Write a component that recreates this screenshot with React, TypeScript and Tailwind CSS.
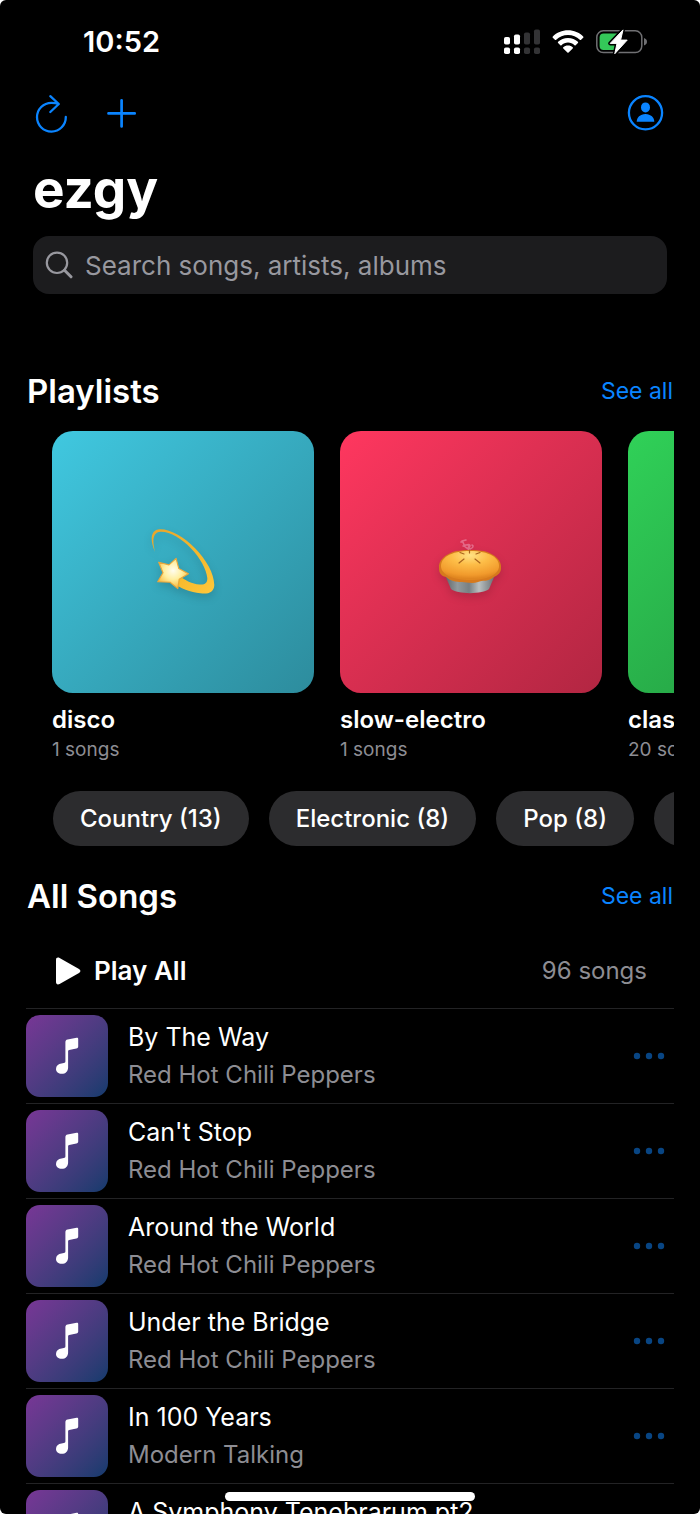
import type { ReactNode } from "react";

type Playlist = { name: string; count: number; gradient: string; art?: ReactNode };
type Song = { title: string; artist: string };

const songs: Song[] = [
  { title: "By The Way", artist: "Red Hot Chili Peppers" },
  { title: "Can't Stop", artist: "Red Hot Chili Peppers" },
  { title: "Around the World", artist: "Red Hot Chili Peppers" },
  { title: "Under the Bridge", artist: "Red Hot Chili Peppers" },
  { title: "In 100 Years", artist: "Modern Talking" },
  { title: "A Symphony Tenebrarum pt2", artist: "" },
];

const genres = ["Country (13)", "Electronic (8)", "Pop (8)"];

function DizzyStar() {
  return (
    <svg viewBox="0 0 66 68" className="w-[66px] h-[68px] drop-shadow-lg" aria-hidden="true">
      <defs>
        <linearGradient id="trail" x1="0" y1="0" x2="1" y2="1">
          <stop offset="0" stopColor="#e9a52c" />
          <stop offset="0.6" stopColor="#f6b92c" />
          <stop offset="1" stopColor="#ffc83c" />
        </linearGradient>
        <radialGradient id="star" cx="0.5" cy="0.4" r="0.65">
          <stop offset="0" stopColor="#fffdf0" />
          <stop offset="0.45" stopColor="#ffefa0" />
          <stop offset="1" stopColor="#f5ae2b" />
        </radialGradient>
      </defs>
      <path
        d="M5.200 24C-.2 13 0 1.500 10 1.300C31.500 1 64.300 34 64.300 57C64 65 57.500 66.300 50.500 65.300C40.500 64.300 30.500 61 21.500 53.500L28 47C35.500 52.500 42 56 49.500 56.500C55 57 57.500 55 57.300 50C56 32 30 3.200 10.500 3.700C2.500 4.200 2 13 5.200 24Z"
        fill="url(#trail)"
      />
      <path
        d="M26.100 30.400L28.800 40.500L38.500 45.800L29.200 51.200L27.800 60.600L20 54.300L7.700 53.700L13 44.800L8.700 34.300L19 36.900Z"
        fill="url(#star)"
        stroke="#eaa63a"
        strokeWidth="1.100"
        strokeLinejoin="round"
      />
    </svg>
  );
}

function Pie() {
  return (
    <svg viewBox="1 -10 66 66" className="size-[66px] drop-shadow-lg" aria-hidden="true">
      <defs>
        <linearGradient id="tin" x1="0" y1="0" x2="1" y2="0">
          <stop offset="0" stopColor="#5e6467" />
          <stop offset="0.25" stopColor="#929a9c" />
          <stop offset="0.48" stopColor="#777f82" />
          <stop offset="0.68" stopColor="#b9bfc0" />
          <stop offset="1" stopColor="#666c70" />
        </linearGradient>
        <radialGradient id="crust" cx="0.5" cy="0.15" r="0.8">
          <stop offset="0" stopColor="#ffe184" />
          <stop offset="0.4" stopColor="#fdbd47" />
          <stop offset="0.85" stopColor="#f19a2c" />
          <stop offset="1" stopColor="#e08620" />
        </radialGradient>
      </defs>
      <path d="M24 3c4-1 1 4 5 3s5 0 3 3M26 7c3 0 4 4 7 3s4-3 2-4M31 12c2-2-1-3 1-5M25 2l4-1" fill="none" stroke="#f0a5c2" strokeOpacity="0.500" strokeWidth="1.600" strokeLinecap="round" />
      <path d="M8 36L14 50C20 55.500 46 55.500 52 50L58 36Z" fill="url(#tin)" />
      <path d="M2 29C1 22 8 15 19 12C28 10.500 39 10.500 47 12C58 15 65 22 64 29C64 34 61 36 57 38C52 43 45 41 41 43C35 45 29 43 25 43C19 43 13 42 9 38C4 37 2 34 2 29Z" fill="#d67a1d" />
      <path d="M4 27C4 19 13 12 33 12C53 12 62 19 62 27C62 36 49 41 33 41C17 41 4 36 4 27Z" fill="url(#crust)" />
      <path d="M22 24l5-4M38 20l5 4M23 13.500l4 1.500M39 15l4-1.500M32.500 11v3" stroke="#a9641d" strokeWidth="1.200" strokeLinecap="round" />
    </svg>
  );
}

const playlists: Playlist[] = [
  { name: "disco", count: 1, gradient: "bg-linear-135 from-[#40c8e0] to-[#2d8c9d]", art: <DizzyStar /> },
  { name: "slow-electro", count: 1, gradient: "bg-linear-135 from-[#ff375f] to-[#b22642]", art: <Pie /> },
  { name: "classic", count: 20, gradient: "bg-linear-135 from-[#30d158] to-[#22923e]" },
];

function StatusBar() {
  return (
    <div className="flex h-[83px] items-center justify-between pl-[83px] pr-[53px]">
      <time className="text-[29px] leading-8 font-semibold">10:52</time>
      <div className="flex items-center gap-3">
        <svg viewBox="0 0 36 26" className="h-[26px] w-9" aria-hidden="true">
          <g fill="#fff">
            <rect x="0" y="8" width="6" height="7.500" rx="1.800" />
            <rect x="10" y="5.500" width="6" height="10" rx="1.800" />
            <rect x="0" y="18.500" width="6" height="6.500" rx="1.800" />
            <rect x="10" y="18.500" width="6" height="6.500" rx="1.800" />
          </g>
          <g fill="#333335">
            <rect x="20" y="3.500" width="6" height="12" rx="1.800" />
            <rect x="30" y="0.500" width="6" height="15" rx="1.800" />
            <rect x="20" y="18.500" width="6" height="6.500" rx="1.800" />
            <rect x="30" y="18.500" width="6" height="6.500" rx="1.800" />
          </g>
        </svg>
        <svg viewBox="0 0 32 24" className="h-6 w-8" aria-hidden="true" fill="#fff">
          <path d="M16 .3C22 .3 27.300 2.600 31.200 6.400C31.600 6.800 31.600 7.300 31.200 7.700L29.100 9.700C28.700 10.100 28.200 10.100 27.800 9.700C24.700 6.800 20.600 5 16 5S7.300 6.800 4.200 9.700C3.800 10.100 3.300 10.100 2.900 9.700L.8 7.700C.4 7.300 .4 6.800 .8 6.400C4.700 2.600 10 .3 16 .3Z" />
          <path d="M16 7.900C19.900 7.900 23.300 9.400 25.900 11.800C26.300 12.200 26.300 12.700 25.900 13.100L23.700 15.200C23.300 15.600 22.900 15.600 22.500 15.200C20.700 13.600 18.500 12.600 16 12.600S11.300 13.600 9.500 15.200C9.100 15.600 8.700 15.600 8.300 15.200L6.100 13.100C5.700 12.700 5.700 12.200 6.100 11.800C8.700 9.400 12.100 7.900 16 7.900Z" />
          <path d="M16 15.500C17.900 15.500 19.500 16.200 20.700 17.200C21.100 17.600 21.100 18 20.700 18.400L16.600 22.500C16.200 22.900 15.800 22.900 15.400 22.500L11.300 18.400C10.900 18 10.900 17.600 11.300 17.200C12.500 16.200 14.100 15.500 16 15.500Z" />
        </svg>
        <svg viewBox="0 0 51 26" className="h-[26px] w-[51px]" aria-hidden="true">
          <rect x="0.800" y="1.800" width="45" height="21.800" rx="6.500" fill="none" stroke="#707073" strokeWidth="1.500" />
          <path d="M48 9C50 9.800 51 11.100 51 12.700S50 15.600 48 16.400Z" fill="#707073" />
          <rect x="3.600" y="4.500" width="22" height="16.400" rx="4" fill="#34c759" />
          <path d="M27 .9L14.200 14.400H21L18.800 24.700L31.200 11.100H24.600Z" fill="#000" stroke="#000" strokeWidth="4" strokeLinejoin="round" />
          <path d="M27 .9L14.200 14.400H21L18.800 24.700L31.200 11.100H24.600Z" fill="#fff" stroke="#fff" strokeWidth="1" strokeLinejoin="round" />
        </svg>
      </div>
    </div>
  );
}

function Toolbar() {
  return (
    <div className="flex h-[60px] items-center justify-between px-[33px] text-[#0a84ff]">
      <div className="flex items-center gap-[34px]">
        <button type="button" aria-label="Refresh">
          <svg viewBox="0 0 38 40" className="h-10 w-[38px]" fill="none" stroke="currentColor" strokeWidth="2.300" strokeLinecap="round" strokeLinejoin="round">
            <path d="M32.800 24A14.400 14.400 0 1 1 18.400 9.800C21.500 9.800 23.800 10.200 25.500 10.900M17.300 3.200L25.800 11L17.300 19" />
          </svg>
        </button>
        <button type="button" aria-label="Add">
          <svg viewBox="0 0 34 34" className="size-[34px]" fill="none" stroke="currentColor" strokeWidth="2.700" strokeLinecap="round">
            <path d="M16.600 4.300V30.500M3.500 17.400H29.700" />
          </svg>
        </button>
      </div>
      <button type="button" aria-label="Account" className="mr-[3px]">
        <svg viewBox="0 0 38 38" className="size-[38px]" fill="currentColor">
          <circle cx="19.500" cy="18.800" r="16.600" fill="none" stroke="currentColor" strokeWidth="2.300" />
          <ellipse cx="19.500" cy="13.400" rx="4.500" ry="5" />
          <path d="M10.700 27.800C10.700 23.800 14.100 20.100 19.500 20.100S28.300 23.800 28.300 27.800Z" />
        </svg>
      </button>
    </div>
  );
}

function SectionHeader({ title }: { title: string }) {
  return (
    <div className="flex items-center justify-between px-[27px]">
      <h2 className="text-[33px] leading-10 font-semibold">{title}</h2>
      <a href="#all" className="text-[23px] leading-8 text-[#0a84ff]">See all</a>
    </div>
  );
}

function SongRow({ title, artist }: Song) {
  return (
    <li className="flex h-[95px] shrink-0 items-center border-t border-[#232325]">
      <div className="flex size-[82px] shrink-0 items-center justify-center rounded-[14px] bg-linear-135 from-[#783696] to-[#123b6d]">
        <svg viewBox="0 0 24 38" className="h-[38px] w-6" fill="#fff" aria-hidden="true">
          <path d="M10.400 5.500C10.400 3.700 11 3 12.600 2.600L21.600 .8C22.600 .6 23.200 1 23.200 2V9.500C23.200 10.600 22.600 11.200 21.400 11.400L14.200 12.900C13.400 13.100 13.100 13.400 13.100 14.200V30.400C13.100 34.200 10.600 36.800 6.700 36.800C3.400 36.800 1 34.700 1 31.900C1 28.800 3.300 27 6.500 26.500L8.800 26.100C10 25.900 10.400 25.400 10.400 24.300Z" />
        </svg>
      </div>
      <div className="ml-5 min-w-0 flex-1">
        <p className="h-[37px] truncate text-[25px] leading-[37px]">{title}</p>
        <p className="h-[37px] truncate text-[24px] leading-[37px] text-[#8d8d93]">{artist}</p>
      </div>
      <button type="button" aria-label={`Options for ${title}`} className="mr-2">
        <svg viewBox="0 0 34 10" className="h-2.5 w-[34px]" fill="#084583">
          <circle cx="5" cy="5" r="3.200" />
          <circle cx="17" cy="5" r="3.200" />
          <circle cx="29" cy="5" r="3.200" />
        </svg>
      </button>
    </li>
  );
}

export default function App() {
  return (
    <div className="h-screen overflow-hidden bg-white">
      <div className="relative h-full overflow-hidden rounded-[6px] bg-black font-['Inter',sans-serif] text-white">
        <StatusBar />
        <Toolbar />
        <header className="px-[33px]">
          <h1 className="mt-2 h-[85px] text-[53px] leading-[76px] font-bold">ezgy</h1>
          <label className="flex h-[58px] items-center rounded-[16px] bg-[#1c1c1e] pl-3 text-[#98989f]">
            <svg viewBox="0 0 28 28" className="size-7 shrink-0" fill="none" stroke="currentColor" strokeLinecap="round" aria-hidden="true">
              <circle cx="12" cy="11.800" r="10.200" strokeWidth="2.200" />
              <path d="M19.500 19.300L26 25.800" strokeWidth="3" />
            </svg>
            <input
              type="search"
              aria-label="Search songs, artists, albums"
              placeholder="Search songs, artists, albums"
              className="ml-3 min-w-0 flex-1 bg-transparent pt-[2px] text-[26px] leading-9 text-white outline-none placeholder:text-[#98989f]"
            />
          </label>
        </header>

        <section className="mt-[77px]">
          <SectionHeader title="Playlists" />
          <div className="mx-[26px] mt-5 flex gap-[26px] overflow-hidden pl-[26px]">
            {playlists.map((p) => (
              <article key={p.name} className="w-[262px] shrink-0">
                <div className={`flex h-[262px] items-center justify-center rounded-[21px] ${p.gradient}`}>{p.art}</div>
                <h3 className="mt-[11px] text-[24px] leading-8 font-semibold">{p.name}</h3>
                <p className="text-[19px] leading-7 text-[#8d8d93]">{p.count} songs</p>
              </article>
            ))}
          </div>
          <div className="mx-[26px] mt-[27px] flex gap-5 overflow-hidden pl-[27px]">
            {genres.map((g) => (
              <button key={g} type="button" className="h-[55px] shrink-0 rounded-full bg-[#2c2c2e] px-[27px] text-[24px] font-medium whitespace-nowrap">
                {g}
              </button>
            ))}
            <button type="button" aria-label="More genres" className="h-[55px] w-40 shrink-0 rounded-full bg-[#2c2c2e]" />
          </div>
        </section>

        <section className="mt-[30px]">
          <SectionHeader title="All Songs" />
          <div className="flex h-[92px] items-center justify-between px-[53px] pt-[18px]">
            <button type="button" className="flex items-center gap-3 text-[26px] leading-9 font-semibold">
              <svg viewBox="0 0 29 30" className="h-[30px] w-[29px]" fill="currentColor" aria-hidden="true">
                <path d="M3 4C3 1.800 4.700 1 6.600 2.100L26 13C27.900 14.100 27.900 15.900 26 17L6.600 27.900C4.700 29 3 28.200 3 26Z" />
              </svg>
              Play All
            </button>
            <span className="text-[24px] leading-9 text-[#8d8d93]">96 songs</span>
          </div>
          <ul className="mx-[26px]">
            {songs.map((s) => (
              <SongRow key={s.title} {...s} />
            ))}
          </ul>
        </section>

        <div className="absolute bottom-[13px] left-1/2 h-[9px] w-[250px] -translate-x-1/2 rounded-full bg-white" />
      </div>
    </div>
  );
}
